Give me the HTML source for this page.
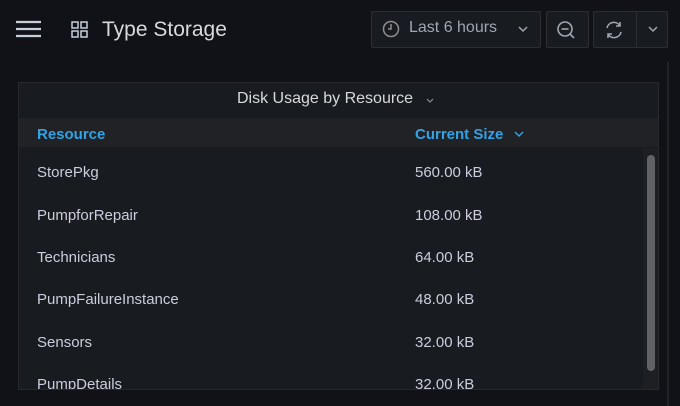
<!DOCTYPE html>
<html><head><style>
body{margin:0;width:680px;height:406px;background:#111217;font-family:"Liberation Sans",sans-serif;overflow:hidden;position:relative;color:#ccccdc}
.a{position:absolute}
.btn{position:absolute;top:11px;height:37px;border:1px solid #2c2e33;border-radius:2px;background:#181b1f;box-sizing:border-box}
.row{position:absolute;left:37px;font-size:15px;color:#ccccdc}
.v{position:absolute;left:415px;font-size:15px;color:#ccccdc}
</style></head><body>
<svg class="a" style="left:16px;top:20px" width="25" height="18"><g stroke="#c7d0d9" stroke-width="2.2"><line x1="0" y1="2" x2="25" y2="2"/><line x1="0" y1="9" x2="25" y2="9"/><line x1="0" y1="16" x2="25" y2="16"/></g></svg>
<svg class="a" style="left:71px;top:21px" width="18" height="18"><g fill="none" stroke="#c7d0d9" stroke-width="1.5"><rect x="1" y="1" width="6" height="6"/><rect x="10" y="1" width="6" height="6"/><rect x="1" y="10" width="6" height="6"/><rect x="10" y="10" width="6" height="6"/></g></svg>
<div class="a" style="left:102px;top:18px;font-size:21px;color:#d8d9da">Type Storage</div>
<div class="btn" style="left:371px;width:170px"></div>
<svg class="a" style="left:382px;top:20px" width="18" height="18"><g fill="none" stroke="#8e8e8e" stroke-width="1.5"><circle cx="9" cy="9" r="7.5"/><path d="M9 4v5h-3"/></g></svg>
<div class="a" style="left:409px;top:19px;font-size:16px;color:#9fa7b3">Last 6 hours</div>
<svg class="a" style="left:518px;top:26px" width="10" height="7"><path d="M1 1l4 4 4-4" fill="none" stroke="#9fa7b3" stroke-width="1.5"/></svg>
<div class="btn" style="left:546px;width:43px"></div>
<svg class="a" style="left:556px;top:20px" width="22" height="20"><g fill="none" stroke="#9fa7b3" stroke-width="1.6"><circle cx="9" cy="9" r="7"/><line x1="5.5" y1="9" x2="12.5" y2="9"/><line x1="14" y1="14" x2="18" y2="18"/></g></svg>
<div class="btn" style="left:593px;width:75px"></div>
<div class="a" style="left:636px;top:12px;width:1px;height:35px;background:#2c2e33"></div>
<svg class="a" style="left:603px;top:19px" width="22" height="22"><g fill="none" stroke="#9fa7b3" stroke-width="1.6"><path d="M4 9a7 7 0 0 1 13-2"/><path d="M17 3v4h-4"/><path d="M18 13a7 7 0 0 1-13 2"/><path d="M5 19v-4h4"/></g></svg>
<svg class="a" style="left:648px;top:26px" width="10" height="7"><path d="M1 1l4 4 4-4" fill="none" stroke="#9fa7b3" stroke-width="1.5"/></svg>
<div class="a" style="left:667px;top:62px;width:2px;height:344px;background:#202226"></div>
<div class="a" style="left:18px;top:82px;width:641px;height:308px;background:#181b1f;border:1px solid #26282c;box-sizing:border-box"></div>
<div class="a" style="left:237px;top:90px;font-size:16px;color:#d8d9da">Disk Usage by Resource</div>
<svg class="a" style="left:426px;top:98px" width="8" height="6"><path d="M1 1l3 3 3-3" fill="none" stroke="#8e8e8e" stroke-width="1.2"/></svg>
<div class="a" style="left:19px;top:118px;width:639px;height:29px;background:#202226"></div>
<div class="a" style="left:37px;top:126px;font-size:15px;font-weight:bold;color:#33a2e5">Resource</div>
<div class="a" style="left:415px;top:126px;font-size:15px;font-weight:bold;color:#33a2e5">Current Size</div>
<svg class="a" style="left:514px;top:131px" width="10" height="7"><path d="M1 1l4 4 4-4" fill="none" stroke="#33a2e5" stroke-width="1.5"/></svg>
<div class="a" style="left:643px;top:148px;width:15px;height:241px;background:#1d1f23"></div>
<div class="a" style="left:647px;top:155px;width:8px;height:216px;background:#606266;border-radius:4px"></div>
<div class="row" style="top:164px">StorePkg</div><div class="v" style="top:164px">560.00 kB</div>
<div class="row" style="top:207px">PumpforRepair</div><div class="v" style="top:207px">108.00 kB</div>
<div class="row" style="top:249px">Technicians</div><div class="v" style="top:249px">64.00 kB</div>
<div class="row" style="top:291px">PumpFailureInstance</div><div class="v" style="top:291px">48.00 kB</div>
<div class="row" style="top:334px">Sensors</div><div class="v" style="top:334px">32.00 kB</div>
<div class="a" style="left:19px;top:370px;width:620px;height:19px;overflow:hidden"><div class="row" style="left:18px;top:6px">PumpDetails</div><div class="v" style="left:396px;top:6px">32.00 kB</div></div>
</body></html>
